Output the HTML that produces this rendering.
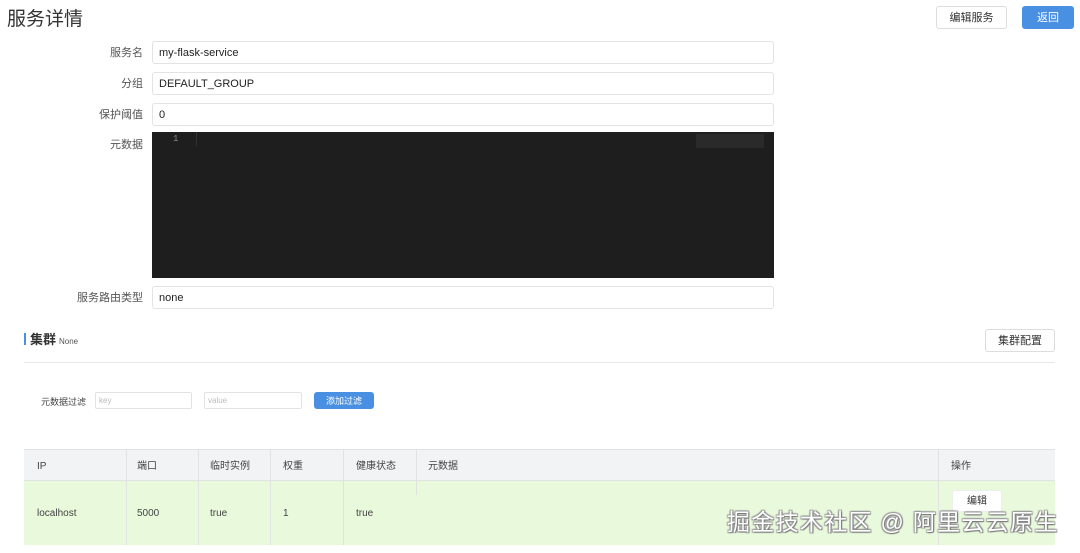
<!DOCTYPE html>
<html><head><meta charset="utf-8"><style>
*{box-sizing:border-box;margin:0;padding:0;line-height:1}
body{width:1080px;height:553px;background:#fff;font-family:"Liberation Sans","Noto Sans CJK SC",sans-serif;color:#333;position:relative;overflow:hidden}
.a{position:absolute}
.lbl{position:absolute;right:937px;font-size:11px;color:#555;line-height:23px}
.inp{position:absolute;left:152px;width:622px;height:23px;border:1px solid #e3e3e3;border-radius:3px;font-size:11px;padding:1px 6px 0;line-height:21px;color:#222}
.btn{position:absolute;border:1px solid #ddd;border-radius:3px;background:#fff;font-size:11px;text-align:center;color:#333}
.blue{background:#4a90e2;border-color:#4a90e2;color:#fff}
.th,.td{position:absolute;font-size:10px;color:#444;line-height:12px}
.vl{position:absolute;width:1px;background:#e2e2e2}
</style></head><body>
<div class="a" style="left:7px;top:9px;font-size:19px;line-height:21px;color:#333">服务详情</div>
<div class="btn" style="left:936px;top:6px;width:71px;height:23px;line-height:22px">编辑服务</div>
<div class="btn blue" style="left:1022px;top:6px;width:52px;height:23px;line-height:22px">返回</div>

<div class="lbl" style="top:42px">服务名</div>
<div class="inp" style="top:41px">my-flask-service</div>
<div class="lbl" style="top:73px">分组</div>
<div class="inp" style="top:72px">DEFAULT_GROUP</div>
<div class="lbl" style="top:104px">保护阈值</div>
<div class="inp" style="top:103px">0</div>
<div class="lbl" style="top:134px">元数据</div>
<div class="a" style="left:152px;top:132px;width:622px;height:146px;background:#1e1e1e"></div>
<div class="a" style="left:196px;top:132px;width:1px;height:14px;background:#333"></div>
<div class="a" style="left:173px;top:135px;font-size:9px;color:#888;font-family:'Liberation Mono',monospace">1</div>
<div class="a" style="left:696px;top:134px;width:68px;height:14px;background:#2a2a2a"></div>
<div class="lbl" style="top:287px">服务路由类型</div>
<div class="inp" style="top:286px">none</div>

<div class="a" style="left:24px;top:333px;width:2px;height:12px;background:#4a90e2"></div>
<div class="a" style="left:30px;top:333px;font-size:13px;line-height:14px;font-weight:bold;color:#333">集群</div>
<div class="a" style="left:59px;top:337px;font-size:8px;line-height:9px;color:#555">None</div>
<div class="btn" style="left:985px;top:329px;width:70px;height:23px;line-height:22px">集群配置</div>
<div class="a" style="left:24px;top:362px;width:1031px;height:1px;background:#e8e8e8"></div>

<div class="a" style="left:41px;top:397px;font-size:9px;line-height:10px;color:#444">元数据过滤</div>
<div class="a" style="left:95px;top:392px;width:97px;height:17px;border:1px solid #e3e3e3;border-radius:2px;font-size:8px;line-height:16px;color:#bbb;padding:0 3px">key</div>
<div class="a" style="left:204px;top:392px;width:98px;height:17px;border:1px solid #e3e3e3;border-radius:2px;font-size:8px;line-height:16px;color:#bbb;padding:0 3px">value</div>
<div class="btn blue" style="left:314px;top:392px;width:60px;height:17px;line-height:16px;font-size:9px">添加过滤</div>

<div class="a" style="left:24px;top:449px;width:1031px;height:32px;background:#f2f3f5;border-top:1px solid #e2e2e2;border-bottom:1px solid #e2e2e2"></div>
<div class="a" style="left:24px;top:481px;width:1031px;height:64px;background:#e8f9dc"></div>
<div class="vl" style="left:126px;top:449px;height:96px"></div>
<div class="vl" style="left:198px;top:449px;height:96px"></div>
<div class="vl" style="left:270px;top:449px;height:96px"></div>
<div class="vl" style="left:343px;top:449px;height:96px"></div>
<div class="vl" style="left:416px;top:449px;height:46px"></div>
<div class="vl" style="left:938px;top:449px;height:96px"></div>
<div class="th" style="left:37px;top:461px">IP</div>
<div class="th" style="left:137px;top:461px">端口</div>
<div class="th" style="left:210px;top:461px">临时实例</div>
<div class="th" style="left:283px;top:461px">权重</div>
<div class="th" style="left:356px;top:461px">健康状态</div>
<div class="th" style="left:428px;top:461px">元数据</div>
<div class="th" style="left:951px;top:461px">操作</div>
<div class="td" style="left:37px;top:508px">localhost</div>
<div class="td" style="left:137px;top:508px">5000</div>
<div class="td" style="left:210px;top:508px">true</div>
<div class="td" style="left:283px;top:508px">1</div>
<div class="td" style="left:356px;top:508px">true</div>
<div class="btn" style="left:952px;top:490px;width:50px;height:22px;line-height:21px;font-size:10px;border-color:#eee">编辑</div>
<div class="a" style="left:727px;top:509px;font-size:23px;line-height:26px;color:#fff;letter-spacing:1.3px;text-shadow:1px 1px 1px #777,-1px -1px 1px #999,1px -1px 1px #999,-1px 1px 1px #999">掘金技术社区 @ 阿里云云原生</div>
</body></html>
